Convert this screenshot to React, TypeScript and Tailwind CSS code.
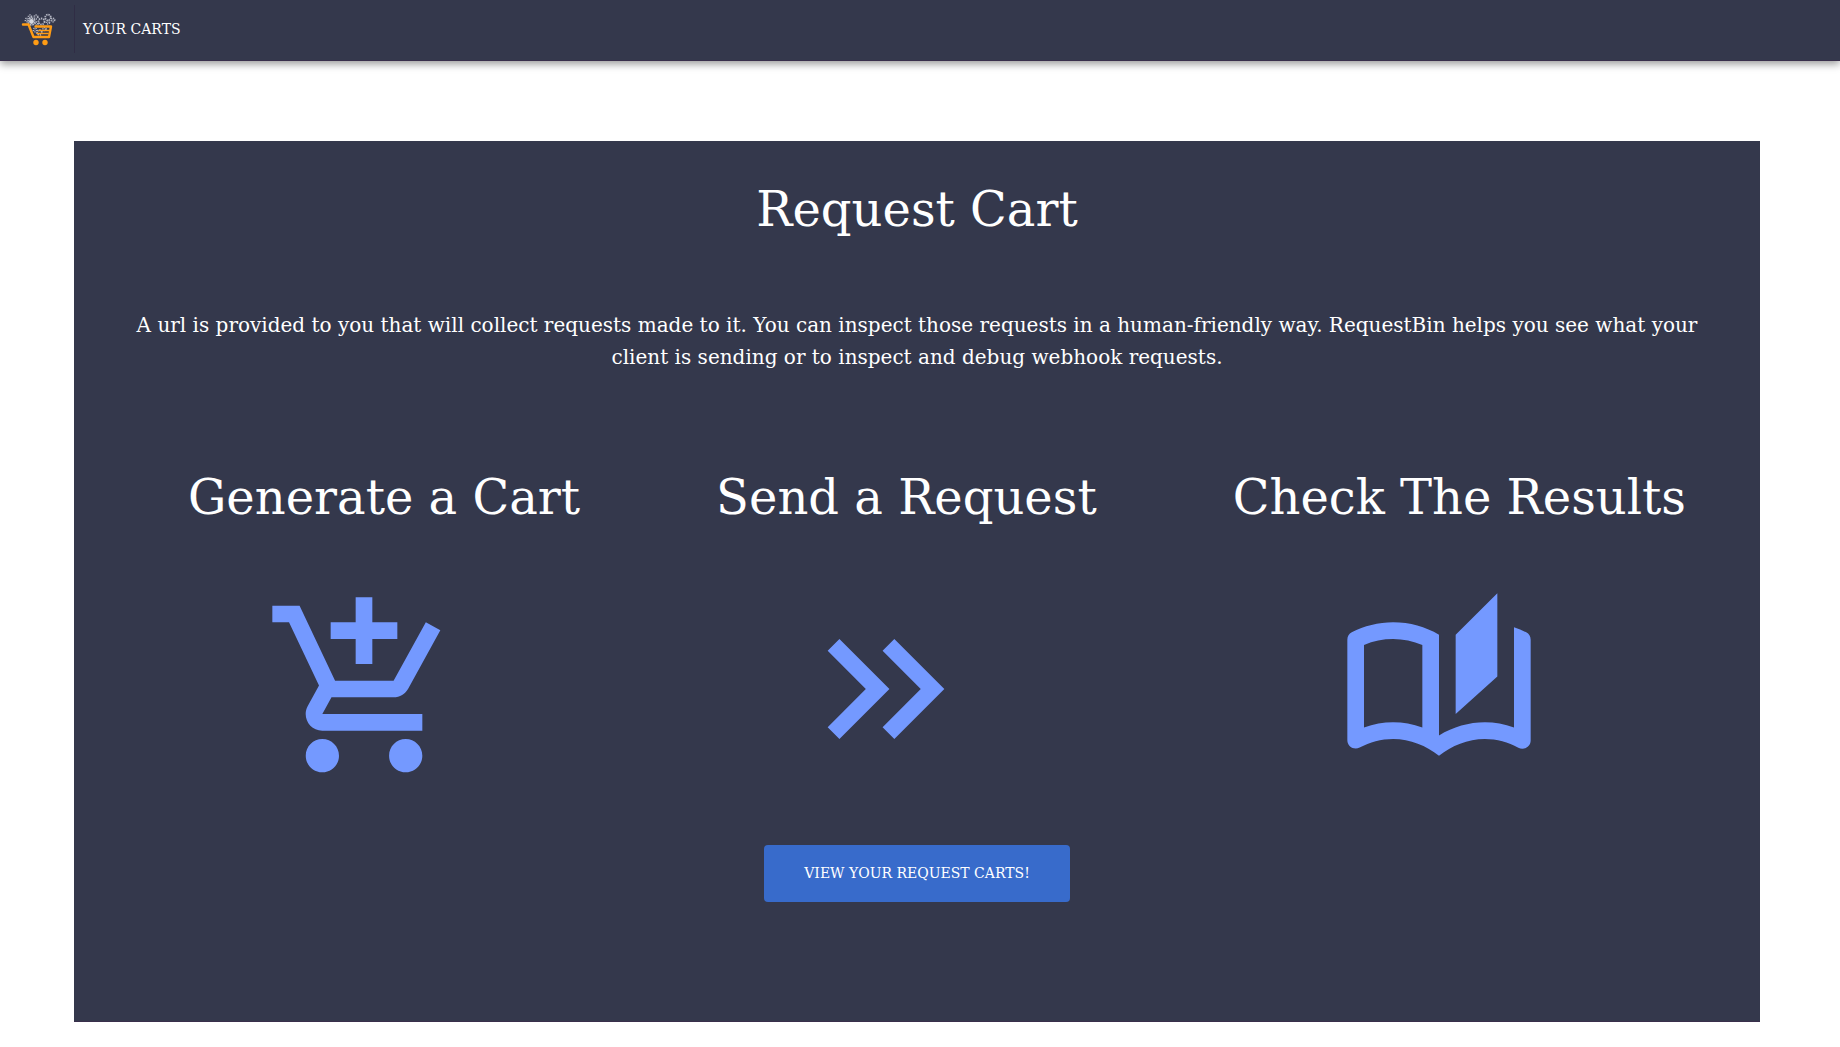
import { MdKeyboardDoubleArrowRight, MdOutlineAddShoppingCart, MdOutlineAutoStories } from 'react-icons/md';

const steps = [
  { title: 'Generate a Cart', Icon: MdOutlineAddShoppingCart },
  { title: 'Send a Request', Icon: MdKeyboardDoubleArrowRight },
  { title: 'Check The Results', Icon: MdOutlineAutoStories },
];

function Logo() {
  return (
    <svg viewBox="0 0 40 36" className="h-9 w-10" aria-hidden="true">
      <g fill="none" stroke="#b4b7c3" strokeWidth="1.8">
        <circle cx="13.5" cy="10.5" r="3.4" strokeDasharray="1.8 0.8" />
        <circle cx="9" cy="9" r="1.6" strokeDasharray="1 0.8" />
        <circle cx="12" cy="5.5" r="1.4" strokeDasharray="1 0.8" />
        <circle cx="18" cy="6" r="1.8" strokeDasharray="1 0.8" />
        <circle cx="23.5" cy="10.5" r="3" strokeDasharray="1.4 0.8" />
        <circle cx="30" cy="6.5" r="2.8" strokeDasharray="1.4 0.8" />
        <circle cx="30" cy="11.5" r="1.4" strokeDasharray="1 0.8" />
        <circle cx="35" cy="9" r="1.6" strokeDasharray="1 0.7" />
        <circle cx="18.5" cy="12.5" r="1.4" strokeDasharray="1 0.8" />
        <circle cx="17" cy="19" r="1.6" strokeDasharray="1 0.8" />
        <circle cx="21.5" cy="21.5" r="2.4" strokeDasharray="1.2 0.8" />
        <circle cx="26.5" cy="18" r="1.4" strokeDasharray="1 0.8" />
      </g>
      <circle cx="13.5" cy="10.5" r="2.4" fill="#d5d7df" />
      <g fill="none" stroke="#ff9c14" strokeLinecap="round" strokeLinejoin="round">
        <path d="M5 13.5h5.500L15.500 26H31l2-10.500H17.500" strokeWidth="2.4" />
        <path d="M31 19.500H21M30 22.500H19" strokeWidth="1.6" />
      </g>
      <circle cx="18" cy="31.5" r="2.7" fill="#ff9c14" />
      <circle cx="27" cy="31.5" r="2.7" fill="#ff9c14" />
    </svg>
  );
}

export default function App() {
  return (
    <div className="min-h-screen bg-white font-['DejaVu_Serif',serif] text-white">
      <header className="border-b border-[#392f4b] bg-[#34384c] shadow-[0_3px_8px_rgba(0,0,0,0.4)]">
        <nav className="flex h-[60px] items-start pt-[5px]">
          <a href="#home" aria-label="Request Cart home" className="flex h-12 items-center border-r border-[#302d45] pr-4 pl-[18px]">
            <Logo />
          </a>
          <a href="#carts" className="flex h-12 items-center px-2 text-sm">
            YOUR CARTS
          </a>
        </nav>
      </header>

      <main className="mt-20 mr-20 ml-[74px] border-b border-[#392f4b] bg-[#34384c] pt-10 pb-[119px] text-center">
        <h1 className="text-5xl leading-[56px]">Request Cart</h1>
        <p className="mt-[72px] px-10 text-xl leading-8">
          A url is provided to you that will collect requests made to it. You can inspect those requests in a
          human-friendly way. RequestBin helps you see what your client is sending or to inspect and debug webhook
          requests.
        </p>

        <ul className="mt-24 flex flex-wrap justify-around px-[26px]">
          {steps.map(({ title, Icon }) => (
            <li key={title} className="flex flex-col items-center gap-16">
              <h2 className="pl-10 text-5xl leading-[56px]">{title}</h2>
              <Icon className="size-[200px] text-[#7499ff]" aria-hidden="true" />
            </li>
          ))}
        </ul>

        <button type="button" className="mt-14 cursor-pointer rounded bg-[#386bcb] px-10 pt-[18px] pb-[19px] text-sm">
          VIEW YOUR REQUEST CARTS!
        </button>
      </main>
    </div>
  );
}
